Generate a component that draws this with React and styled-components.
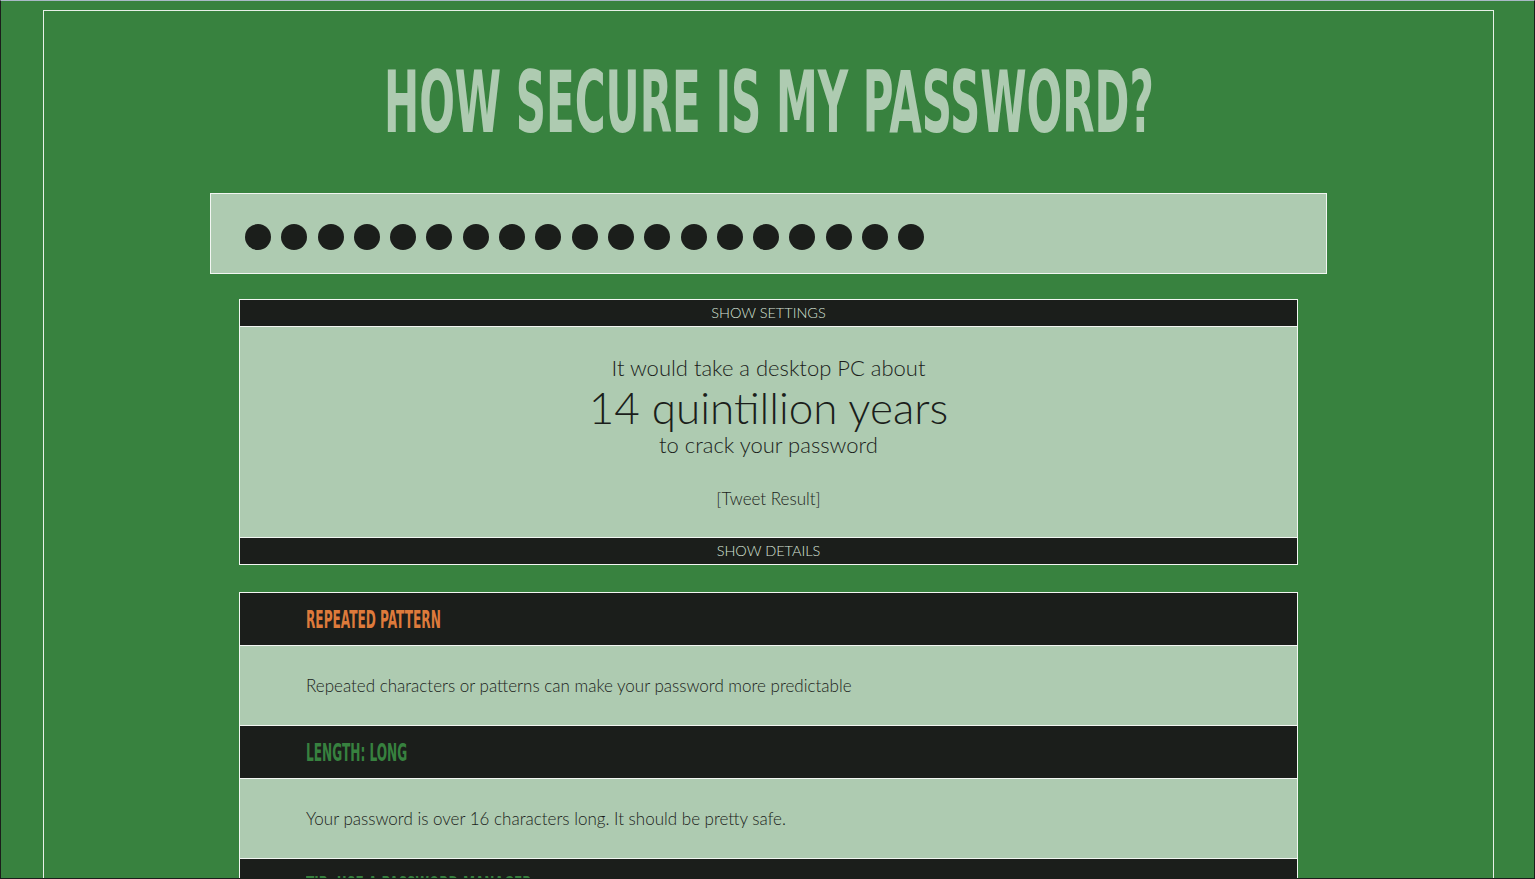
import React from "react";
import styled, { createGlobalStyle } from "styled-components";

const Global = createGlobalStyle`
  html, body { margin: 0; padding: 0; background: #38823f; }
  body { font-family: Lato, "Open Sans", sans-serif; }
`;

const Page = styled.div`
  box-sizing: border-box;
  height: 100vh;
  overflow: hidden;
  background: #38823f;
  border-top: 1px solid #a9b9c6;
  border-left: 1px solid #1b1e1b;
  border-right: 1px solid #1b1e1b;
  border-bottom: 1px solid #1b1e1b;
  padding: 9px 40px 0 42px;
`;

const Frame = styled.div`
  border: 1px solid #e8f0e8;
  border-bottom: 0;
  min-height: 1000px;
  display: flex;
  flex-direction: column;
  align-items: center;
`;

const Title = styled.h1`
  margin: 0;
  padding: 46px 0 46px;
  color: #aecbb1;
  font-family: "Liberation Sans Narrow", "DejaVu Sans Condensed", sans-serif;
  font-weight: 700;
  font-size: 86px;
  line-height: 90px;
  white-space: nowrap;
  text-align: center;
  span { display: inline-block; transform: scaleX(0.543); }
`;

const Field = styled.div`
  box-sizing: border-box;
  width: 1117px;
  height: 81px;
  background: #aecbb1;
  border: 1px solid #f2f6f2;
  display: flex;
  align-items: center;
  gap: 10.3px;
  padding: 6px 0 0 34px;
`;

const Dot = styled.span`
  width: 26px;
  height: 26px;
  border-radius: 50%;
  background: #1b1e1b;
  flex: none;
`;

const Panel = styled.div`
  box-sizing: border-box;
  width: 1059px;
  margin-top: ${(p) => p.$top}px;
  border: 1px solid #f2f6f2;
  border-bottom: 0;
`;

const Toggle = styled.div`
  height: 26px;
  background: #1b1e1b;
  border-bottom: 1px solid #f2f6f2;
  color: #d6e2d6;
  font-size: 14.5px;
  font-weight: 300;
  text-transform: uppercase;
  text-align: center;
  line-height: 26px;
`;

const Result = styled.div`
  height: 211px;
  background: #aecbb1;
  border-bottom: 1px solid #f2f6f2;
  color: #1b1e1b;
  text-align: center;
  font-weight: 300;
  padding-top: 26px;
  box-sizing: border-box;
`;

const Line = styled.div`
  font-size: ${(p) => p.$size}px;
  line-height: ${(p) => p.$lh}px;
`;

const Tweet = styled.div`
  margin-top: 30px;
  font-size: 17px;
  line-height: 20px;
  font-weight: 300;
`;

const ItemHead = styled.div`
  box-sizing: border-box;
  height: 53px;
  background: #1b1e1b;
  border-bottom: 1px solid #f2f6f2;
  padding: 0 0 0 66px;
  display: flex;
  align-items: center;
  white-space: nowrap;
  color: ${(p) => p.$color};
  font-family: "Liberation Sans Narrow", "DejaVu Sans Condensed", sans-serif;
  font-weight: 700;
  font-size: 25px;
  span { display: inline-block; transform: scaleX(0.54); transform-origin: left center; }
`;

const ItemBody = styled.div`
  box-sizing: border-box;
  height: 80px;
  background: #aecbb1;
  border-bottom: 1px solid #f2f6f2;
  padding: 0 0 0 66px;
  display: flex;
  align-items: center;
  color: #1b1e1b;
  font-size: 17px;
  font-weight: 300;
`;

const items = [
  { title: "Repeated Pattern", color: "#dd7a3b", text: "Repeated characters or patterns can make your password more predictable" },
  { title: "Length: Long", color: "#37813f", text: "Your password is over 16 characters long. It should be pretty safe." },
  { title: "Tip: Use a Password Manager", color: "#37813f", text: "" },
];

export default function App() {
  return (
    <Page>
      <Global />
      <Frame>
        <Title><span>HOW SECURE IS MY PASSWORD?</span></Title>
        <Field>
          {Array.from({ length: 19 }).map((_, i) => <Dot key={i} />)}
        </Field>
        <Panel $top={25}>
          <Toggle>Show Settings</Toggle>
          <Result>
            <Line $size={22} $lh={30}>It would take a desktop PC about</Line>
            <Line $size={44} $lh={48}>14 quintillion years</Line>
            <Line $size={22} $lh={28}>to crack your password</Line>
            <Tweet>[Tweet Result]</Tweet>
          </Result>
          <Toggle>Show Details</Toggle>
        </Panel>
        <Panel $top={27}>
          {items.map((it) => (
            <React.Fragment key={it.title}>
              <ItemHead $color={it.color}><span>{it.title.toUpperCase()}</span></ItemHead>
              <ItemBody>{it.text}</ItemBody>
            </React.Fragment>
          ))}
        </Panel>
      </Frame>
    </Page>
  );
}
